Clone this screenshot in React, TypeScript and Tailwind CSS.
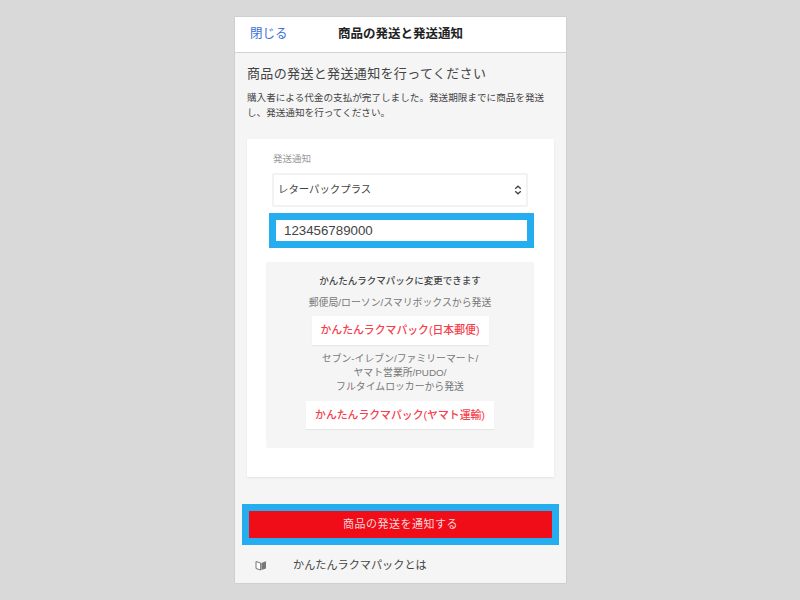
const font = "font-['Liberation_Sans','Noto_Sans_CJK_JP',sans-serif]"

export default function App() {
  return (
    <div className={`h-[600px] w-[800px] overflow-hidden bg-[#d9d9d9] pt-[17px] pl-[235px] ${font}`}>
      <div className="flex h-[566px] w-[331px] flex-col bg-[#f5f5f5] shadow-[0_0_1px_rgba(0,0,0,0.25)]">
        {/* header */}
        <div className="relative flex h-[36px] items-center justify-center border-b border-[#d4d4d4] bg-white">
          <span className="absolute left-[15px] text-[12.5px] text-[#3b6fd8]">閉じる</span>
          <span className="text-[12.5px] font-bold text-[#222]">商品の発送と発送通知</span>
        </div>

        <div className="px-[12px] pt-[12px]">
          <h1 className="text-[13px] leading-[18px] tracking-[0.35px] text-[#444]">商品の発送と発送通知を行ってください</h1>
          <p className="mt-[8px] text-[9.6px] leading-[14.5px] text-[#444]">
            購入者による代金の支払が完了しました。発送期限までに商品を発送し、発送通知を行ってください。
          </p>
        </div>

        {/* form card */}
        <div className="mx-[12px] mt-[19px] h-[338px] bg-white px-[20px] pt-[13px] shadow-[0_1px_2px_rgba(0,0,0,0.08)]">
          <div className="pl-[6px] text-[9.5px] leading-[13px] text-[#999]">発送通知</div>
          <div className="mt-[8px] ml-[5px] flex h-[34px] w-[256px] items-center justify-between rounded-[2px] border-2 border-[#f2f2f2] px-[4px]">
            <span className="text-[10.4px] text-[#444]">レターパックプラス</span>
            <svg width="8" height="10" viewBox="0 0 8 10" fill="none" stroke="#444" strokeWidth="1.3">
              <path d="M1.2 3.8 4 1.2l2.8 2.6M1.2 6.2 4 8.8l2.8-2.6" />
            </svg>
          </div>
          <div className="mt-[6px] ml-[2px] flex h-[35px] w-[265px] items-center border-[7px] border-[#24aeef] bg-white pl-[8px] text-[13.3px] text-[#444]">
            123456789000
          </div>

          {/* rakuraku pack */}
          <div className="mt-[14px] -ml-[1px] flex h-[186px] w-[268px] flex-col items-center rounded-[2px] bg-[#f5f5f5] pt-[11px]">
            <div className="text-[9.5px] leading-[15px] font-medium text-[#444]">かんたんラクマパックに変更できます</div>
            <div className="mt-[7px] text-[9.9px] leading-[15px] text-[#777]">郵便局/ローソン/スマリボックスから発送</div>
            <div className="mt-[6px] flex h-[29px] w-[177px] items-center justify-center bg-white text-[10.85px] font-medium text-[#f6404c] shadow-[0_1px_1px_rgba(0,0,0,0.06)]">
              かんたんラクマパック(日本郵便)
            </div>
            <div className="mt-[7px] text-center text-[9.85px] leading-[14px] text-[#777]">
              セブン-イレブン/ファミリーマート/
              <br />
              ヤマト営業所/PUDO/
              <br />
              フルタイムロッカーから発送
            </div>
            <div className="mt-[7px] flex h-[28px] w-[188px] items-center justify-center bg-white text-[10.85px] font-medium text-[#f6404c] shadow-[0_1px_1px_rgba(0,0,0,0.06)]">
              かんたんラクマパック(ヤマト運輸)
            </div>
          </div>
        </div>

        {/* submit */}
        <div className="mx-[7px] mt-[27px] flex h-[41px] w-[317px] items-center justify-center border-[7px] border-[#24aeef] bg-[#f00d18] text-[11px] tracking-[0.5px] text-[#fbd5d7]">
          商品の発送を通知する
        </div>

        {/* help link */}
        <div className="flex flex-1 items-center pt-[2px] pl-[20px]">
          <svg width="12" height="11" viewBox="0 0 12 11">
            <path d="M1 1.5 5.6 3v7L1 8.5z" fill="#fff" stroke="#777" strokeWidth="1" />
            <path d="M6.4 3 11 1.2v7.3L6.4 10z" fill="#777" />
          </svg>
          <span className="ml-[26px] text-[11.15px] text-[#444]">かんたんラクマパックとは</span>
        </div>
      </div>
    </div>
  )
}
